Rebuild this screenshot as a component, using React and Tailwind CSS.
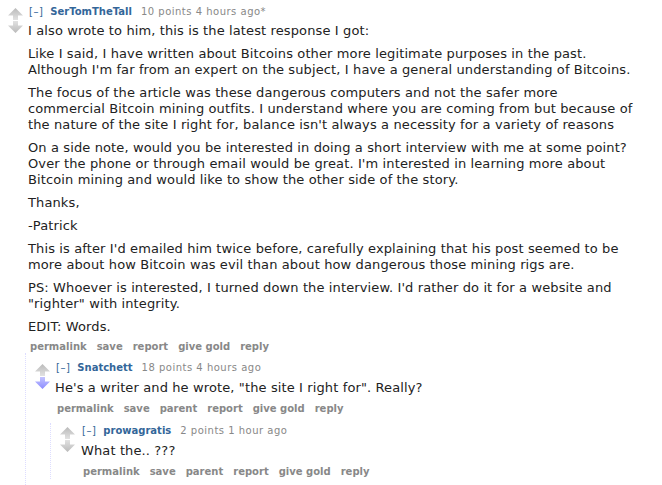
import React from "react";

/* vote arrows, drawn like the old reddit sprites */
const UpArrow = () => (
  <svg width="15" height="12" viewBox="0 0 15 12">
    <defs>
      <linearGradient id="upGray" x1="0" y1="0" x2="0" y2="1">
        <stop offset="0" stopColor="#bababa" />
        <stop offset="1" stopColor="#e2e2e2" />
      </linearGradient>
    </defs>
    <path d="M7.5 0 L15 7.5 L10 7.5 L10 12 L5 12 L5 7.5 L0 7.5 Z" fill="url(#upGray)" />
  </svg>
);

const DownArrow = ({ voted }) => (
  <svg width="15" height="12" viewBox="0 0 15 12">
    <defs>
      <linearGradient id="downGray" x1="0" y1="0" x2="0" y2="1">
        <stop offset="0" stopColor="#e2e2e2" />
        <stop offset="1" stopColor="#bababa" />
      </linearGradient>
      <linearGradient id="downBlue" x1="0" y1="0" x2="0" y2="1">
        <stop offset="0" stopColor="#c4c4ff" />
        <stop offset="1" stopColor="#8c8cff" />
      </linearGradient>
    </defs>
    <path
      d="M5 0 L10 0 L10 4.5 L15 4.5 L7.5 12 L0 4.5 L5 4.5 Z"
      fill={voted ? "url(#downBlue)" : "url(#downGray)"}
    />
  </svg>
);

const Tagline = ({ author, info }) => (
  <p className="pl-[1px] text-[10px] leading-[12px] text-[#888] whitespace-nowrap">
    <span className="text-[#369] tracking-[0.5px]">[–]</span>
    <span className="ml-[7px] font-bold text-[#369]">{author}</span>
    <span className="ml-[9px] tracking-[0.5px]">{info}</span>
  </p>
);

const Buttons = ({ items, className }) => (
  <ul className={"pl-[2px] flex gap-[10px] text-[10px] leading-[12px] font-bold text-[#888] " + className}>
    {items.map((b) => (
      <li key={b}>{b}</li>
    ))}
  </ul>
);

// each paragraph is a list of lines, broken where the original wrapped
const Body = ({ paragraphs, className }) => (
  <div className={"flex flex-col gap-[7px] text-[13px] leading-[16px] tracking-[0.12px] text-[#222] " + className}>
    {paragraphs.map((lines, i) => (
      <p key={i} className="whitespace-nowrap">
        {lines.map((l, j) => (
          <React.Fragment key={j}>
            {j > 0 && <br />}
            {l}
          </React.Fragment>
        ))}
      </p>
    ))}
  </div>
);

const mainText = [
  ["I also wrote to him, this is the latest response I got:"],
  [
    "Like I said, I have written about Bitcoins other more legitimate purposes in the past.",
    "Although I'm far from an expert on the subject, I have a general understanding of Bitcoins.",
  ],
  [
    "The focus of the article was these dangerous computers and not the safer more",
    "commercial Bitcoin mining outfits. I understand where you are coming from but because of",
    "the nature of the site I right for, balance isn't always a necessity for a variety of reasons",
  ],
  [
    "On a side note, would you be interested in doing a short interview with me at some point?",
    "Over the phone or through email would be great. I'm interested in learning more about",
    "Bitcoin mining and would like to show the other side of the story.",
  ],
  ["Thanks,"],
  ["-Patrick"],
  [
    "This is after I'd emailed him twice before, carefully explaining that his post seemed to be",
    "more about how Bitcoin was evil than about how dangerous those mining rigs are.",
  ],
  [
    "PS: Whoever is interested, I turned down the interview. I'd rather do it for a website and",
    "\"righter\" with integrity.",
  ],
  ["EDIT: Words."],
];

export default function App() {
  return (
    <div className="w-[662px] h-[485px] overflow-hidden bg-white [font-family:'DejaVu_Sans',Verdana,sans-serif]">
      {/* top level comment */}
      <div className="pt-[6px]">
        <div className="flex">
          <div className="w-[28px] pl-[8px] pt-[2px] flex flex-col gap-[1px] shrink-0">
            <UpArrow />
            <DownArrow />
          </div>
          <div className="flex-1 min-w-0">
            <Tagline author="SerTomTheTall" info="10 points 4 hours ago*" />
            <Body className="mt-[5px]" paragraphs={mainText} />
            <Buttons className="mt-[6px]" items={["permalink", "save", "report", "give gold", "reply"]} />
          </div>
        </div>

        {/* replies */}
        <div className="ml-[25px] pb-[20px] border-l border-dotted border-[#ddf]">
          <div className="pt-[9px]">
            <div className="flex">
              <div className="w-[29px] pl-[9px] pt-[2px] flex flex-col gap-[1px] shrink-0">
                <UpArrow />
                <DownArrow voted />
              </div>
              <div className="flex-1 min-w-0">
                <Tagline author="Snatchett" info="18 points 4 hours ago" />
                <Body
                  className="mt-[6px]"
                  paragraphs={[["He's a writer and he wrote, \"the site I right for\". Really?"]]}
                />
                <Buttons
                  className="mt-[7px]"
                  items={["permalink", "save", "parent", "report", "give gold", "reply"]}
                />
              </div>
            </div>

            <div className="mt-[8px] ml-[24px] pb-[1px] border-l border-dotted border-[#ddf]">
              <div className="pt-[2px] flex">
                <div className="w-[30px] pl-[9px] pt-[2px] flex flex-col gap-[1px] shrink-0">
                  <UpArrow />
                  <DownArrow />
                </div>
                <div className="flex-1 min-w-0">
                  <Tagline author="prowagratis" info="2 points 1 hour ago" />
                  <Body className="mt-[6px]" paragraphs={[["What the.. ???"]]} />
                  <Buttons
                    className="mt-[7px]"
                    items={["permalink", "save", "parent", "report", "give gold", "reply"]}
                  />
                </div>
              </div>
            </div>
          </div>
        </div>
      </div>
    </div>
  );
}
